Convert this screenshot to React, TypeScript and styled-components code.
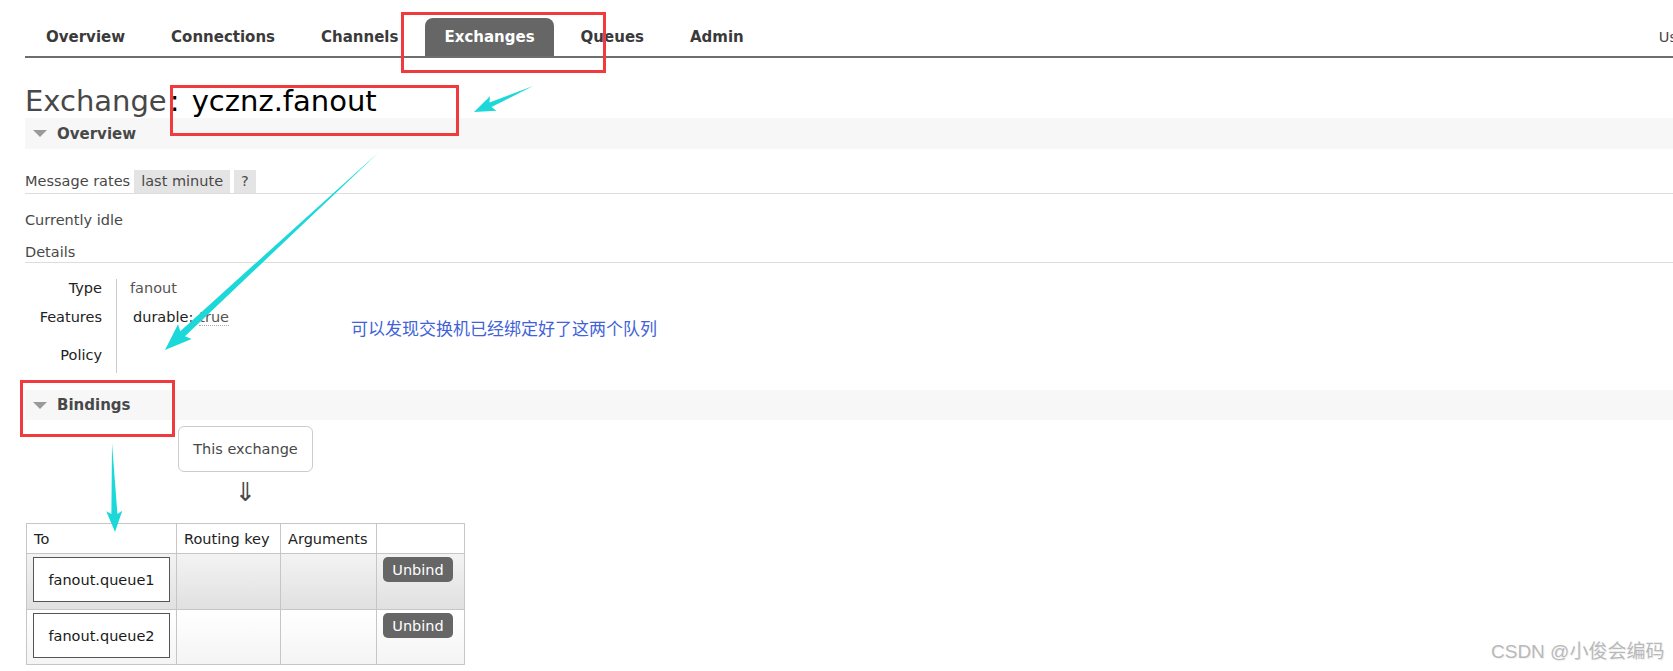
import styled, { createGlobalStyle } from "styled-components";

const GlobalStyle = createGlobalStyle`
  html, body {
    margin: 0;
    padding: 0;
    overflow: hidden;
    background: #fff;
  }
  body {
    font-family: "DejaVu Sans", Verdana, sans-serif;
    font-size: 14.5px;
    color: #484848;
  }
`;

const Page = styled.div`
  position: relative;
  height: 671px;
  padding: 18px 0 0 25px;
  box-sizing: border-box;
`;

const Nav = styled.nav`
  display: flex;
  align-items: stretch;
  gap: 8px;
  padding-left: 2px;
  height: 38px;
  border-bottom: 2px solid #6e6e6e;
`;

const NavItem = styled.a<{ $active?: boolean }>`
  display: flex;
  align-items: center;
  padding: 0 19px;
  font-size: 15px;
  font-weight: bold;
  color: ${(p) => (p.$active ? "#fff" : "#3a3a3a")};
  background: ${(p) => (p.$active ? "#666" : "transparent")};
  border-radius: 8px 8px 0 0;
  text-decoration: none;
  white-space: nowrap;
`;

const NavUser = styled.div`
  display: flex;
  align-items: center;
  margin-left: auto;
  margin-right: -64px;
  white-space: nowrap;
  color: #484848;
`;

const Title = styled.h1`
  margin: 26px 0 0;
  height: 34px;
  font-size: 29px;
  line-height: 34px;
  font-weight: normal;
  color: #484848;
  white-space: nowrap;
`;

const TitleName = styled.span`
  margin-left: 3px;
  color: #000;
`;

const Colon = styled.span`
  color: #000;
  margin-left: 3px;
`;

const SectionBar = styled.div<{ $top: number; $height: number }>`
  display: flex;
  align-items: center;
  gap: 10px;
  margin-top: ${(p) => p.$top}px;
  height: ${(p) => p.$height}px;
  padding-left: 8px;
  background: #f7f7f7;
  font-size: 15px;
  font-weight: bold;
  color: #484848;
`;

const RatesRow = styled.div`
  display: flex;
  align-items: stretch;
  gap: 4px;
  margin-top: 21px;
  height: 23px;
  line-height: 23px;
  border-bottom: 1px solid #ddd;
`;

const Pill = styled.span`
  background: #e4e4e4;
  padding: 0 7px;
`;

const Line = styled.div<{ $top: number; $rule?: boolean }>`
  margin-top: ${(p) => p.$top}px;
  line-height: 20px;
  border-bottom: ${(p) => (p.$rule ? "1px solid #ddd" : "none")};
`;

const DetailsGrid = styled.div`
  display: grid;
  grid-template-columns: 91px auto;
  grid-template-rows: 18px 40px 36px;
  justify-content: start;
  margin-top: 16px;
`;

const DetailLabel = styled.div`
  display: flex;
  align-items: center;
  justify-content: flex-end;
  padding-right: 14px;
  color: #222;
`;

const DetailValue = styled.div`
  display: flex;
  align-items: center;
  gap: 6px;
  padding-left: 13px;
  border-left: 1px solid #ccc;
  color: #555;
`;

const Feature = styled.span`
  color: #222;
  padding-left: 3px;
`;

const Abbr = styled.span`
  border-bottom: 1px dotted #aaa;
  color: #555;
`;

const ThisExchange = styled.div`
  display: flex;
  align-items: center;
  justify-content: center;
  box-sizing: border-box;
  margin: 6px 0 0 153px;
  width: 135px;
  height: 46px;
  border: 1px solid #ccc;
  border-radius: 6px;
  color: #484848;
`;

const DownArrow = styled.div`
  margin-left: 153px;
  width: 135px;
  height: 51px;
  text-align: center;
  font-size: 26px;
  line-height: 40px;
  color: #484848;
`;

const BindTable = styled.table`
  margin-left: 1px;
  border-collapse: collapse;
  border: 1px solid #c6c6c6;
`;

const HeadCell = styled.th<{ $w: number }>`
  width: ${(p) => p.$w}px;
  height: 30px;
  box-sizing: border-box;
  padding: 0 7px;
  border: 1px solid #c6c6c6;
  text-align: left;
  font-weight: normal;
  color: #222;
  background: #fff;
`;

const BodyRow = styled.tr<{ $shade: boolean }>`
  height: ${(p) => (p.$shade ? 56 : 55)}px;
  background: ${(p) =>
    p.$shade
      ? "linear-gradient(#f3f3f3, #e0e0e0)"
      : "linear-gradient(#fff, #f4f4f4)"};
`;

const Cell = styled.td`
  vertical-align: top;
  padding: 3px 6px;
  border: 1px solid #c6c6c6;
`;

const QueueBox = styled.div`
  display: flex;
  align-items: center;
  justify-content: center;
  box-sizing: border-box;
  width: 137px;
  height: 45px;
  border: 1px solid #555;
  background: #fff;
  color: #1a1a1a;
`;

const UnbindButton = styled.button`
  width: 70px;
  height: 25px;
  padding: 0;
  border: 0;
  border-radius: 5px;
  background: #666;
  color: #fff;
  font-family: inherit;
  font-size: 14.5px;
`;

const RedBox = styled.div<{ $x: number; $y: number; $w: number; $h: number }>`
  position: absolute;
  left: ${(p) => p.$x}px;
  top: ${(p) => p.$y}px;
  width: ${(p) => p.$w}px;
  height: ${(p) => p.$h}px;
  box-sizing: border-box;
  border: 3px solid #f03a3e;
  pointer-events: none;
`;

const Note = styled.div`
  position: absolute;
  left: 351px;
  top: 317px;
  font-family: "Noto Sans CJK SC", sans-serif;
  font-size: 17px;
  line-height: 22px;
  color: #4262d8;
  white-space: nowrap;
`;

const Watermark = styled.div`
  position: absolute;
  left: 1491px;
  top: 640px;
  font-family: "Liberation Sans", "Noto Sans CJK SC", sans-serif;
  font-size: 19px;
  line-height: 24px;
  color: #b9b9b9;
  text-shadow: 1px 1px 0 #f2f2f2;
  white-space: nowrap;
`;

const Overlay = styled.svg`
  position: absolute;
  left: 0;
  top: 0;
  pointer-events: none;
`;

type Pt = [number, number];

function arrowPoints(t: Pt, h: Pt, shaft: number, len: number, half: number) {
  const dx = h[0] - t[0];
  const dy = h[1] - t[1];
  const d = Math.hypot(dx, dy);
  const ux = dx / d;
  const uy = dy / d;
  const nx = -uy;
  const ny = ux;
  const bx = h[0] - ux * len;
  const by = h[1] - uy * len;
  const pts: Pt[] = [
    t,
    [bx + (nx * shaft) / 2, by + (ny * shaft) / 2],
    [bx + nx * half - ux * 3, by + ny * half - uy * 3],
    h,
    [bx - nx * half - ux * 3, by - ny * half - uy * 3],
    [bx - (nx * shaft) / 2, by - (ny * shaft) / 2],
  ];
  return pts.map((p) => p.join(",")).join(" ");
}

const Triangle = () => (
  <svg width="14" height="7" viewBox="0 0 14 7">
    <polygon points="0,0 14,0 7,7" fill="#9a9a9a" />
  </svg>
);

const navItems = ["Overview", "Connections", "Channels", "Exchanges", "Queues", "Admin"];

const bindings = ["fanout.queue1", "fanout.queue2"];

export default function App() {
  return (
    <>
      <GlobalStyle />
      <Page>
        <Nav>
          {navItems.map((item) => (
            <NavItem key={item} $active={item === "Exchanges"}>
              {item}
            </NavItem>
          ))}
          <NavUser>User guest</NavUser>
        </Nav>

        <Title>
          Exchange<Colon>:</Colon> <TitleName>ycznz.fanout</TitleName>
        </Title>

        <SectionBar $top={0} $height={31}>
          <Triangle />
          Overview
        </SectionBar>

        <RatesRow>
          <span>Message rates</span>
          <Pill>last minute</Pill>
          <Pill>?</Pill>
        </RatesRow>

        <Line $top={16}>Currently idle</Line>
        <Line $top={12} $rule>
          Details
        </Line>

        <DetailsGrid>
          <DetailLabel>Type</DetailLabel>
          <DetailValue>fanout</DetailValue>
          <DetailLabel>Features</DetailLabel>
          <DetailValue>
            <Feature>durable:</Feature>
            <Abbr>true</Abbr>
          </DetailValue>
          <DetailLabel>Policy</DetailLabel>
          <DetailValue />
        </DetailsGrid>

        <SectionBar $top={17} $height={30}>
          <Triangle />
          Bindings
        </SectionBar>

        <ThisExchange>This exchange</ThisExchange>
        <DownArrow>⇓</DownArrow>

        <BindTable>
          <thead>
            <tr>
              <HeadCell $w={150}>To</HeadCell>
              <HeadCell $w={104}>Routing key</HeadCell>
              <HeadCell $w={96}>Arguments</HeadCell>
              <HeadCell $w={88}></HeadCell>
            </tr>
          </thead>
          <tbody>
            {bindings.map((q, i) => (
              <BodyRow key={q} $shade={i === 0}>
                <Cell>
                  <QueueBox>{q}</QueueBox>
                </Cell>
                <Cell />
                <Cell />
                <Cell>
                  <UnbindButton>Unbind</UnbindButton>
                </Cell>
              </BodyRow>
            ))}
          </tbody>
        </BindTable>

        <RedBox $x={401} $y={12} $w={205} $h={61} />
        <RedBox $x={170} $y={85} $w={289} $h={51} />
        <RedBox $x={20} $y={380} $w={155} $h={57} />

        <Note>可以发现交换机已经绑定好了这两个队列</Note>
        <Watermark>CSDN @小俊会编码</Watermark>

        <Overlay width={1673} height={671}>
          <polygon points={arrowPoints([533, 86], [474, 112], 5, 18, 8)} fill="#1cd8d9" />
          <polygon points={arrowPoints([379, 152], [165, 350], 7, 24, 10)} fill="#1cd8d9" />
          <polygon points={arrowPoints([112, 443], [115, 532], 6, 18, 8)} fill="#1cd8d9" />
        </Overlay>
      </Page>
    </>
  );
}
